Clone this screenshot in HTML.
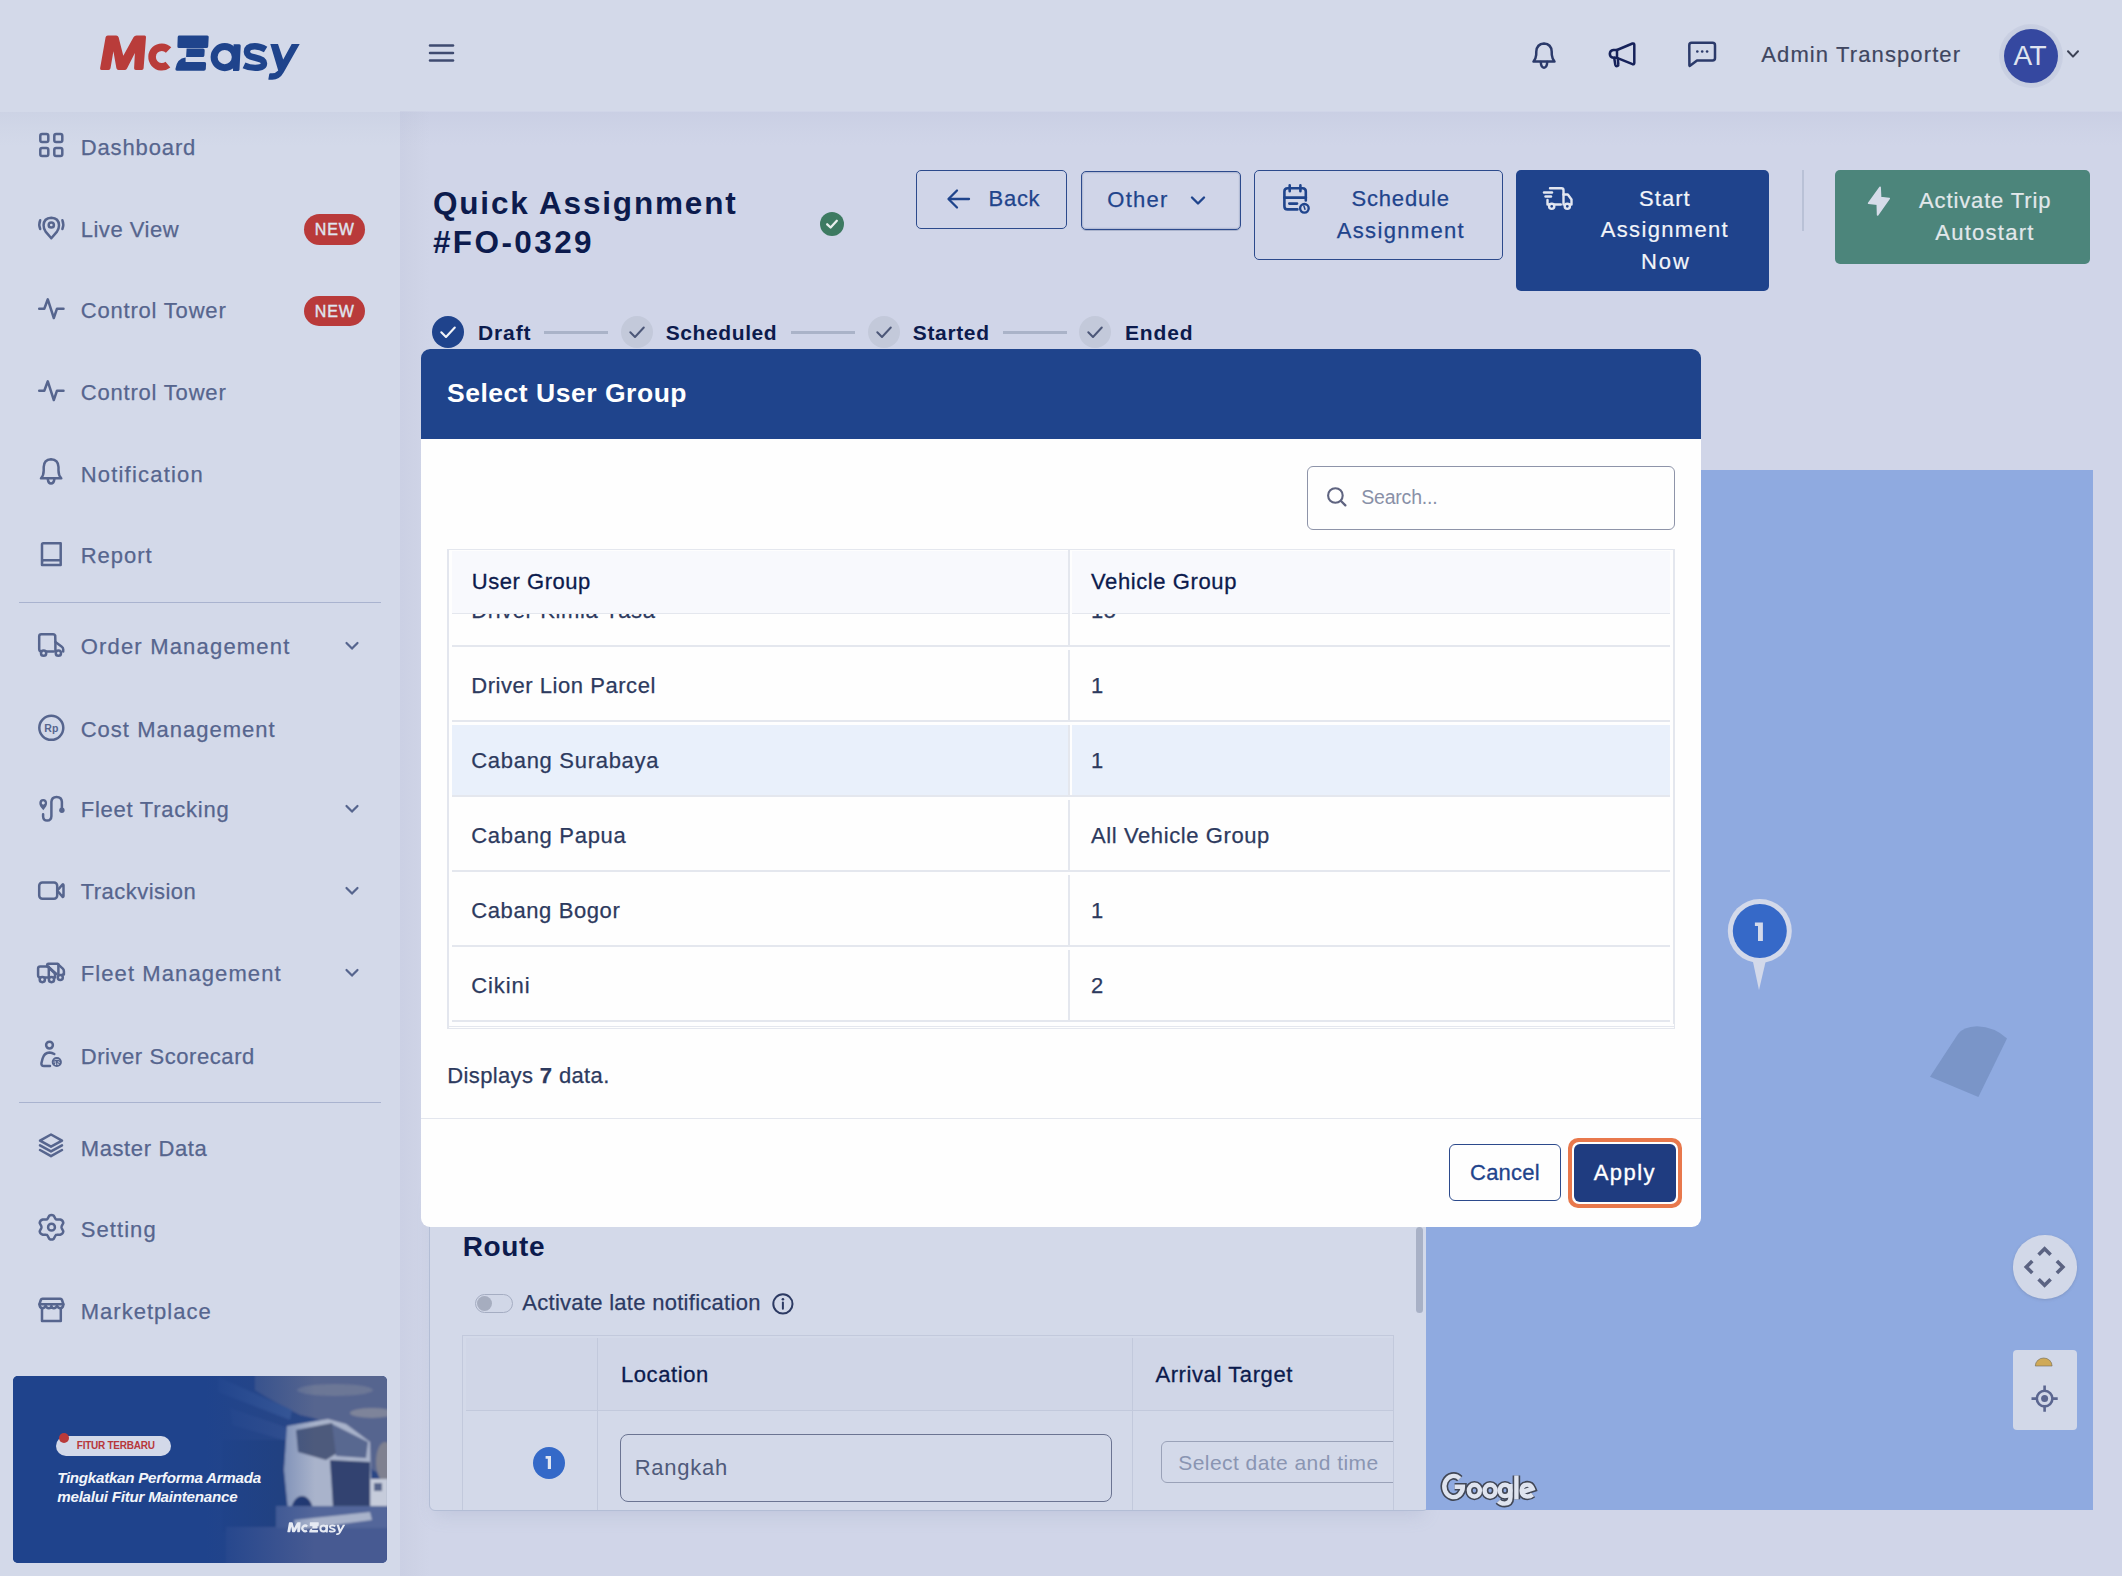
<!DOCTYPE html>
<html><head><meta charset="utf-8"><style>
*{box-sizing:border-box;margin:0;padding:0}
html,body{width:2122px;height:1576px;overflow:hidden}
body{background:#d3d9e9;font-family:"Liberation Sans",sans-serif;position:relative}
.a{position:absolute}
.t{position:absolute;line-height:1;white-space:nowrap}
svg{position:absolute;overflow:visible}
</style></head><body>
<div class="a" style="left:400px;top:111px;width:1722px;height:1465px;background:#d0d5e8"></div>
<div class="a" style="left:400px;top:111px;width:30px;height:1465px;background:linear-gradient(90deg,#cbd0e4,#cdd2e5 40%,rgba(208,213,232,0))"></div>
<div class="a" style="left:0;top:111.5px;width:2122px;height:34px;background:linear-gradient(rgba(150,160,195,.11),rgba(150,160,195,.05) 45%,rgba(150,160,195,0))"></div>
<svg style="left:0;top:0" width="400" height="1576" viewBox="0 0 400 1576"><g transform="translate(0 0) scale(1.0)">
<path fill="#b93c3a" d="M101.5 69.9 Q99.8 69.9 100.1 68.2 L105.6 37.2 Q106 35.4 107.8 35.4 L116.2 35.4 Q118 35.4 118.6 37.2 L123.3 55.7 L133.5 37.3 Q134.5 35.4 136.5 35.4 L144.6 35.4 Q146.2 35.4 146 37.2 L143.6 68.2 Q143.4 69.9 141.8 69.9 L135.8 69.9 Q134 69.9 134.1 68.2 L134.9 52.9 L127 68.4 Q126.2 69.9 124.5 69.9 L118.5 69.9 Q116.8 69.9 116.4 68.3 L113.4 51.2 L110.5 68.3 Q110.2 69.9 108.5 69.9 Z"/>
<path fill="none" stroke="#b93c3a" stroke-width="7.6" d="M168.6 50 A9.7 9.8 0 1 0 167.9 64.6"/>
<g fill="#1f448c">
<path d="M178.8 35.4 L207.2 35.4 Q208.9 35.4 208.7 37.1 L208.2 46.4 Q208 48.1 206.3 48.1 L179 48.1 Q177.3 48.1 177.4 46.4 L177.7 37.1 Q177.9 35.4 178.8 35.4 Z"/>
<path d="M186.6 48.6 L203 48.6 Q204.8 48.6 204.7 50.4 L204.4 55.4 Q204.3 57.1 202.6 57.1 L186.1 57.1 Z"/>
<path d="M185.6 57.4 L185.6 62 L204.5 62 Q206.3 62 206.1 63.8 L205.8 69 Q205.6 70.7 203.9 70.7 L177 70.7 Q175.2 70.7 175.4 69 Q176.8 58.3 185.6 57.4 Z"/>
<path d="M233.6 44.2 L239.3 44.2 Q240.8 44.2 240.7 45.7 L239.5 69.7 Q239.4 71.1 238 71.1 L233 71.1 Z"/>
<path d="M270.3 44 L278 44 L283.2 59.6 L291.7 44 L299.7 44 L283.6 72.6 Q279.6 79.8 272.3 79.8 L268.6 79.8 Q268.3 79.8 268.4 79 L269.2 74.3 Q269.4 73.3 270.4 73.3 L272.4 73.3 Q275.6 73.3 278.2 70.5 Z"/>
</g>
<circle cx="224.7" cy="57.1" r="10.6" fill="none" stroke="#1f448c" stroke-width="7"/>
<path fill="none" stroke="#1f448c" stroke-width="6.4" d="M265.6 49.6 Q260.2 46.3 254.8 46.3 Q246.9 46.4 246.9 51.8 Q247 56 254.6 57.5 Q263.9 59.3 264 63.3 Q264 67.9 255.2 67.9 Q249.4 67.9 244 65.3"/>
</g></svg>
<svg style="left:428px;top:40px" width="28" height="26" viewBox="0 0 28 26"><g stroke="#3f4b70" stroke-width="2.5" stroke-linecap="round"><line x1="2" y1="5.5" x2="25" y2="5.5"/><line x1="2" y1="13" x2="25" y2="13"/><line x1="2" y1="20.5" x2="25" y2="20.5"/></g></svg>
<div class="t" style="left:80.7px;top:136.68px;font-size:22px;color:#56658e;letter-spacing:0.88px;font-weight:400;-webkit-text-stroke:0.25px #56658e">Dashboard</div>
<div class="t" style="left:80.7px;top:218.58px;font-size:22px;color:#56658e;letter-spacing:0.53px;font-weight:400;-webkit-text-stroke:0.25px #56658e">Live View</div>
<div class="t" style="left:80.7px;top:300.38px;font-size:22px;color:#56658e;letter-spacing:0.81px;font-weight:400;-webkit-text-stroke:0.25px #56658e">Control Tower</div>
<div class="t" style="left:80.7px;top:381.58px;font-size:22px;color:#56658e;letter-spacing:0.81px;font-weight:400;-webkit-text-stroke:0.25px #56658e">Control Tower</div>
<div class="t" style="left:80.7px;top:463.88px;font-size:22px;color:#56658e;letter-spacing:1.2px;font-weight:400;-webkit-text-stroke:0.25px #56658e">Notification</div>
<div class="t" style="left:80.7px;top:545.08px;font-size:22px;color:#56658e;letter-spacing:0.99px;font-weight:400;-webkit-text-stroke:0.25px #56658e">Report</div>
<div class="t" style="left:80.7px;top:635.98px;font-size:22px;color:#56658e;letter-spacing:1.19px;font-weight:400;-webkit-text-stroke:0.25px #56658e">Order Management</div>
<div class="t" style="left:80.7px;top:718.98px;font-size:22px;color:#56658e;letter-spacing:1.02px;font-weight:400;-webkit-text-stroke:0.25px #56658e">Cost Management</div>
<div class="t" style="left:80.7px;top:799.18px;font-size:22px;color:#56658e;letter-spacing:0.76px;font-weight:400;-webkit-text-stroke:0.25px #56658e">Fleet Tracking</div>
<div class="t" style="left:80.7px;top:880.88px;font-size:22px;color:#56658e;letter-spacing:0.46px;font-weight:400;-webkit-text-stroke:0.25px #56658e">Trackvision</div>
<div class="t" style="left:80.7px;top:962.88px;font-size:22px;color:#56658e;letter-spacing:1.1px;font-weight:400;-webkit-text-stroke:0.25px #56658e">Fleet Management</div>
<div class="t" style="left:80.7px;top:1046.08px;font-size:22px;color:#56658e;letter-spacing:0.57px;font-weight:400;-webkit-text-stroke:0.25px #56658e">Driver Scorecard</div>
<div class="t" style="left:80.7px;top:1137.98px;font-size:22px;color:#56658e;letter-spacing:0.62px;font-weight:400;-webkit-text-stroke:0.25px #56658e">Master Data</div>
<div class="t" style="left:80.7px;top:1219.08px;font-size:22px;color:#56658e;letter-spacing:1.08px;font-weight:400;-webkit-text-stroke:0.25px #56658e">Setting</div>
<div class="t" style="left:80.7px;top:1300.68px;font-size:22px;color:#56658e;letter-spacing:1.02px;font-weight:400;-webkit-text-stroke:0.25px #56658e">Marketplace</div>
<div class="a" style="left:304px;top:214px;width:61px;height:30.5px;border-radius:16px;background:#b93a3a"></div>
<div class="t" style="left:314.8px;top:222.36px;font-size:16px;color:#dfe5f0;letter-spacing:0.9px;font-weight:400;-webkit-text-stroke:0.4px #dfe5f0">NEW</div>
<div class="a" style="left:304px;top:295.5px;width:61px;height:30.5px;border-radius:16px;background:#b93a3a"></div>
<div class="t" style="left:314.8px;top:303.86px;font-size:16px;color:#dfe5f0;letter-spacing:0.9px;font-weight:400;-webkit-text-stroke:0.4px #dfe5f0">NEW</div>
<div class="a" style="left:19px;top:602px;width:362px;height:1.3px;background:#a9b3cf"></div>
<div class="a" style="left:19px;top:1102px;width:362px;height:1.3px;background:#a9b3cf"></div>
<svg style="left:345px;top:641px" width="14" height="10" viewBox="0 0 14 10"><path d="M1.5 2 L7 7.6 L12.5 2" fill="none" stroke="#56658e" stroke-width="2.2" stroke-linecap="round" stroke-linejoin="round"/></svg>
<svg style="left:345px;top:804px" width="14" height="10" viewBox="0 0 14 10"><path d="M1.5 2 L7 7.6 L12.5 2" fill="none" stroke="#56658e" stroke-width="2.2" stroke-linecap="round" stroke-linejoin="round"/></svg>
<svg style="left:345px;top:886px" width="14" height="10" viewBox="0 0 14 10"><path d="M1.5 2 L7 7.6 L12.5 2" fill="none" stroke="#56658e" stroke-width="2.2" stroke-linecap="round" stroke-linejoin="round"/></svg>
<svg style="left:345px;top:968px" width="14" height="10" viewBox="0 0 14 10"><path d="M1.5 2 L7 7.6 L12.5 2" fill="none" stroke="#56658e" stroke-width="2.2" stroke-linecap="round" stroke-linejoin="round"/></svg>
<svg style="left:38px;top:132px" width="27" height="27" viewBox="0 0 27 27"><g fill="none" stroke="#56658e" stroke-width="2.5" stroke-linecap="round" stroke-linejoin="round"><rect x="2.3" y="2.1" width="8" height="8" rx="1.8"/><rect x="16.3" y="2.1" width="8" height="8" rx="1.8"/><rect x="2.3" y="16" width="8" height="8" rx="1.8"/><rect x="16.3" y="16" width="8" height="8" rx="1.8"/></g></svg>
<svg style="left:37px;top:215px" width="28" height="26" viewBox="0 0 28 26"><g fill="none" stroke="#56658e" stroke-width="2.5" stroke-linecap="round" stroke-linejoin="round">
<path d="M14.3 23.3 L8.6 16.6 Q6.6 14 6.6 10.3 Q6.8 3.1 14.3 2.8 Q21.8 3.1 22 10.3 Q22 14 20 16.6 Z"/>
<circle cx="14.3" cy="10" r="2.6"/>
<path d="M3.2 5.2 Q1.4 9.5 3.2 14"/><path d="M25.4 5.2 Q27.2 9.5 25.4 14"/></g></svg>
<svg style="left:37px;top:296px" width="29" height="26" viewBox="0 0 29 26"><g fill="none" stroke="#56658e" stroke-width="2.5" stroke-linecap="round" stroke-linejoin="round"><path d="M2.2 12.7 L7.3 12.7 L10.8 3.3 L16.8 22 L20 12.7 L26.5 12.7"/></g></svg>
<svg style="left:37px;top:378px" width="29" height="26" viewBox="0 0 29 26"><g fill="none" stroke="#56658e" stroke-width="2.5" stroke-linecap="round" stroke-linejoin="round"><path d="M2.2 12.7 L7.3 12.7 L10.8 3.3 L16.8 22 L20 12.7 L26.5 12.7"/></g></svg>
<svg style="left:37px;top:457px" width="28" height="30" viewBox="0 0 28 30"><g fill="none" stroke="#56658e" stroke-width="2.5" stroke-linecap="round" stroke-linejoin="round"><path d="M4 21.3 L24.3 21.3 Q21.5 18.6 21.5 13.5 L21.5 10 Q21.3 2.6 14 2.2 Q6.9 2.6 6.7 10 L6.7 13.5 Q6.7 18.6 4 21.3 Z"/><path d="M10.8 22 Q11.3 26.5 14 26.6 Q16.8 26.5 17.4 22"/></g></svg>
<svg style="left:38px;top:540px" width="27" height="28" viewBox="0 0 27 28"><g fill="none" stroke="#56658e" stroke-width="2.5" stroke-linecap="round" stroke-linejoin="round"><path d="M4 25 L4 4.5 Q4 3.2 5.3 3.2 L22.7 3.2 L22.7 25 L5.3 25 Q4 25 4 23.8 Q4 20.2 5.3 20.2 L22.7 20.2"/></g></svg>
<svg style="left:37px;top:632px" width="29" height="28" viewBox="0 0 29 28"><g fill="none" stroke="#56658e" stroke-width="2.5" stroke-linecap="round" stroke-linejoin="round"><path d="M4.5 19.5 Q2.2 19.3 2.2 17 L2.2 4.3 Q2.3 2.4 4.3 2.3 L16.2 2.3 Q17.6 2.3 18.2 3.6 L18.4 10 L24.5 14.5 Q26.2 15.7 26.2 17.2 L26.2 19.5"/><path d="M9 19.5 L16.5 19.5"/><path d="M18.4 10 L18.4 19.5"/><circle cx="6.6" cy="21.2" r="2.6"/><circle cx="21.4" cy="21.2" r="2.6"/></g></svg>
<svg style="left:37px;top:713px" width="29" height="30" viewBox="0 0 29 30"><g fill="none" stroke="#56658e" stroke-width="2.5" stroke-linecap="round" stroke-linejoin="round"><circle cx="14.3" cy="14.8" r="12"/></g><text x="14.3" y="18.6" text-anchor="middle" font-family="Liberation Sans" font-weight="700" font-size="10.5" fill="#56658e">Rp</text></svg>
<svg style="left:34px;top:790px" width="36" height="36" viewBox="34 790 36 36"><g fill="none" stroke="#56658e" stroke-width="2.5" stroke-linecap="round" stroke-linejoin="round" stroke-width="2.5"><path d="M43.1 814.2 L43.1 816.5 Q43.3 820.6 47.2 820.6 Q51.2 820.6 51.4 816.3 L51.4 801.9 Q51.6 796.9 56.6 796.9 Q61.7 796.9 61.9 801.9 L61.9 808.3"/></g><path d="M43.3 810.3 L40.3 806.4 Q39.3 804.9 39.3 803 Q39.5 799 43.2 798.9 Q46.9 799 47.1 803 Q47.1 804.9 46.1 806.4 Z M43.2 801.6 A1.4 1.4 0 1 0 43.21 801.6 Z" fill="#56658e" fill-rule="evenodd"/><circle cx="61.9" cy="810.3" r="2.7" fill="#56658e"/><circle cx="43.2" cy="802.9" r="1.3" fill="#d3d9e9"/></svg>
<svg style="left:37px;top:879px" width="29" height="24" viewBox="0 0 29 24"><g fill="none" stroke="#56658e" stroke-width="2.5" stroke-linecap="round" stroke-linejoin="round"><rect x="2.2" y="3.5" width="18" height="16.3" rx="3.2"/><path d="M20.2 11.6 L25.5 5.5 Q26.4 5 26.5 6.3 L26.5 17 Q26.4 18.3 25.5 17.8 Z"/></g></svg>
<svg style="left:34px;top:955px" width="36" height="36" viewBox="34 955 36 36"><g fill="none" stroke="#56658e" stroke-width="2.5" stroke-linecap="round" stroke-linejoin="round" stroke-width="2.4"><path d="M40.2 977.4 Q38.1 977.4 38.1 975.3 L38.1 968.4 Q38.2 966.4 40.2 966.4 L48.3 966.4 L48.8 966.8 L48.8 977.4"/><path d="M48.8 967.5 L54 972.5 Q55 973.6 55 975 L55 977.4 L53.8 977.4"/><path d="M44.9 977.4 L49 977.4"/><path d="M47.2 966.4 L47.2 964.6 Q47.3 963.7 48.2 963.7 L57.6 963.7 L58.4 964.3 L58.4 974.4"/><path d="M58.4 964.6 L62.8 968.6 Q63.9 969.7 63.9 971.2 L63.9 974.4 L62.6 974.4"/><path d="M48.8 967.3 L56.4 974"/><circle cx="42.3" cy="979.6" r="2.6"/><circle cx="51.5" cy="979.6" r="2.6"/><circle cx="60.3" cy="977.6" r="2.5"/></g></svg>
<svg style="left:34px;top:1036px" width="36" height="36" viewBox="34 1036 36 36"><g fill="none" stroke="#56658e" stroke-width="2.5" stroke-linecap="round" stroke-linejoin="round" stroke-width="2.5"><circle cx="49.5" cy="1045.1" r="3.4"/><path d="M54.3 1054 Q52 1052.5 49.5 1052.4 Q44.2 1052.6 42.6 1058.5 L41.4 1063.2 Q41.2 1066 44 1066 L50 1066"/></g><circle cx="56.8" cy="1062" r="4.1" fill="none" stroke="#56658e" stroke-width="2"/><path d="M53.5 1061.4 Q56.8 1059.3 60.1 1061.4 M56.8 1062 L56.8 1065.8 M55.2 1062.5 L53.8 1064.3 M58.4 1062.5 L59.8 1064.3" fill="none" stroke="#56658e" stroke-width="1.3"/><circle cx="56.8" cy="1062" r="1.2" fill="#56658e"/></svg>
<svg style="left:37px;top:1131px" width="28" height="29" viewBox="0 0 28 29"><g fill="none" stroke="#56658e" stroke-width="2.5" stroke-linecap="round" stroke-linejoin="round"><path d="M14 3.5 L25 9.6 L14 15.7 L3 9.6 Z"/><path d="M3 14.3 L14 20.4 L25 14.3"/><path d="M3 19 L14 25.2 L25 19"/></g></svg>
<svg style="left:34.7px;top:1212.4px" width="33" height="33" viewBox="0 0 24 24"><g fill="none" stroke="#56658e" stroke-width="1.8" stroke-linecap="round" stroke-linejoin="round"><path d="M10.3 2.8 Q12 1.5 13.7 2.8 L14.9 5 Q15.2 5.5 15.8 5.5 L18.3 5.5 Q20.3 6 20.6 8 L19.4 10.3 Q19.1 11 19.4 11.7 L20.6 14 Q20.4 16.1 18.3 16.5 L15.8 16.6 Q15.2 16.6 14.9 17.1 L13.7 19.4 Q12 20.7 10.3 19.4 L9.1 17.1 Q8.8 16.6 8.2 16.6 L5.7 16.5 Q3.6 16.1 3.4 14 L4.6 11.7 Q4.9 11 4.6 10.3 L3.4 8 Q3.7 6 5.7 5.5 L8.2 5.5 Q8.8 5.5 9.1 5 Z"/><circle cx="12" cy="11" r="2.5"/></g></svg>
<svg style="left:37px;top:1296px" width="29" height="28" viewBox="0 0 29 28"><g fill="none" stroke="#56658e" stroke-width="2.5" stroke-linecap="round" stroke-linejoin="round"><path d="M5.5 2.8 L23.3 2.8 Q24.6 2.8 25 4 L26.3 8 Q26.5 11.8 23.5 12.2 Q20.8 12.2 20 9.6 Q19.2 12.2 16.8 12.2 Q14.8 12.2 14.4 10 Q14 12.2 11.8 12.2 Q9.4 12.2 8.6 9.6 Q7.8 12.2 5.3 12.2 Q2.4 11.8 2.5 8 L3.8 4 Q4.2 2.8 5.5 2.8 Z"/><path d="M2.6 8.3 L26.2 8.3"/><path d="M5 12.2 L5 25 L23.8 25 L23.8 12.2"/></g></svg>
<svg style="left:1530px;top:41px" width="30" height="30" viewBox="0 0 30 30"><g fill="none" stroke="#2b3a6a" stroke-width="2.5" stroke-linecap="round" stroke-linejoin="round"><path d="M3.5 20.5 L24.5 20.5 Q22.3 18 21.8 13.8 L21.7 10.5 Q21.3 3.2 14 2.6 Q6.8 3.2 6.3 10.5 L6.2 13.8 Q5.8 18 3.5 20.5 Z"/><path d="M10.8 21 Q11 26.5 14 26.7 Q17 26.5 17.2 21"/></g></svg>
<svg style="left:1607px;top:40px" width="32" height="30" viewBox="0 0 32 30"><g fill="none" stroke="#16225a" stroke-width="2.5" stroke-linecap="round" stroke-linejoin="round"><path d="M10 10 L25.5 3.5 Q27.2 3 27.3 4.8 L27.3 23 Q27.2 24.8 25.5 24.2 L10 17.8 Z"/><path d="M10 10 L6.3 10 Q3 10.3 2.8 13.9 Q3 17.5 6.3 17.8 L10 17.8"/><path d="M7.2 17.8 L8.3 24.8 Q8.8 26.3 10.2 26.1 Q11.5 25.8 11.3 24.2 L10.8 18.6"/></g></svg>
<svg style="left:1686px;top:40px" width="32" height="30" viewBox="0 0 32 30"><g fill="none" stroke="#2b3a6a" stroke-width="2.5" stroke-linecap="round" stroke-linejoin="round"><path d="M5.5 2.8 L26.5 2.8 Q29 2.8 29 5.3 L29 18 Q29 20.5 26.5 20.5 L11 20.5 L4 25.8 Q3.5 26.2 3.4 25.4 L3.3 5.3 Q3.3 2.8 5.5 2.8 Z"/></g><g fill="#2b3a6a"><circle cx="11.3" cy="11.5" r="1.3"/><circle cx="16.2" cy="11.5" r="1.3"/><circle cx="21.1" cy="11.5" r="1.3"/></g></svg>
<div class="t" style="left:1761.3px;top:43.78px;font-size:22px;color:#3f4660;letter-spacing:1.11px;font-weight:400;-webkit-text-stroke:0.2px #3f4660">Admin Transporter</div>
<div class="a" style="left:1999px;top:24px;width:64px;height:64px;border-radius:50%;background:radial-gradient(circle,#c6cde0 60%,#cdd3e5 80%,#d3d9e9 100%)"></div>
<div class="a" style="left:2004px;top:28.8px;width:54.2px;height:54.2px;border-radius:50%;background:#3548a0"></div>
<div class="t" style="left:2013.5px;top:42.20px;font-size:28px;color:#dfe3ef;letter-spacing:-0.7px;font-weight:400;">AT</div>
<svg style="left:2066px;top:48px" width="14" height="12" viewBox="0 0 14 12"><path d="M2 3.3 L7 8.6 L12 3.3" fill="none" stroke="#3c4255" stroke-width="2" stroke-linecap="round" stroke-linejoin="round"/></svg>
<div class="t" style="left:432.9px;top:188.04px;font-size:31.5px;color:#0c1b4d;letter-spacing:1.83px;font-weight:700;">Quick Assignment</div>
<div class="t" style="left:432.9px;top:227.24px;font-size:31.5px;color:#0c1b4d;letter-spacing:2.41px;font-weight:700;">#FO-0329</div>
<div class="a" style="left:820px;top:212.4px;width:24px;height:24px;border-radius:50%;background:#3d7a61"></div>
<svg style="left:820px;top:212.4px" width="24" height="24" viewBox="0 0 24 24"><path d="M7.2 12.3 L10.6 15.5 L16.8 8.8" fill="none" stroke="#e9efed" stroke-width="2.3" stroke-linecap="round" stroke-linejoin="round"/></svg>
<div class="a" style="left:916px;top:170.3px;width:151px;height:58.5px;border:1.4px solid #2c4a8c;border-radius:5px"></div>
<svg style="left:946px;top:187px" width="26" height="24" viewBox="0 0 26 24"><g fill="none" stroke="#1f448c" stroke-width="2.3" stroke-linecap="round" stroke-linejoin="round"><path d="M23 12 L3 12"/><path d="M11 3.5 L2.5 12 L11 20.5"/></g></svg>
<div class="t" style="left:988.6px;top:188.08px;font-size:22px;color:#1f448c;letter-spacing:0.69px;font-weight:400;-webkit-text-stroke:0.25px #1f448c">Back</div>
<div class="a" style="left:1080.5px;top:170.5px;width:160px;height:59.5px;border:1.4px solid #2c4a8c;border-radius:5px;box-shadow:0 0 0 1.2px #b3bcd5 inset, 0 1px 0 #aab3cc"></div>
<div class="t" style="left:1107.3px;top:188.98px;font-size:22px;color:#1f448c;letter-spacing:1.24px;font-weight:400;-webkit-text-stroke:0.25px #1f448c">Other</div>
<svg style="left:1189px;top:193px" width="18" height="16" viewBox="0 0 18 16"><path d="M3 4.5 L9 10.5 L15 4.5" fill="none" stroke="#1f448c" stroke-width="2.4" stroke-linecap="round" stroke-linejoin="round"/></svg>
<div class="a" style="left:1254px;top:170px;width:249px;height:90px;border:1.4px solid #2c4a8c;border-radius:5px"></div>
<svg style="left:1270px;top:175px" width="50" height="45" viewBox="1270 175 50 45"><g fill="none" stroke="#1f448c" stroke-width="2.6" stroke-linecap="round" stroke-linejoin="round"><path d="M1297.4 209.4 L1287.6 209.4 Q1284.4 209.4 1284.4 206.2 L1284.4 191.5 Q1284.4 188.3 1287.6 188.3 L1302.6 188.3 Q1305.8 188.3 1305.8 191.5 L1305.8 200.5"/><path d="M1289.7 185.4 L1289.7 191.2 M1300.4 185.4 L1300.4 191.2"/><path d="M1284.4 197.6 L1305.8 197.6"/><path d="M1289.3 203.6 L1297 203.6"/><circle cx="1304.4" cy="208.3" r="4.3" stroke-width="2.4"/><path d="M1303.9 206 L1305 209.2" stroke-width="1.5"/></g></svg>
<div class="t" style="left:1351.4px;top:187.98px;font-size:22px;color:#1f448c;letter-spacing:0.84px;font-weight:400;-webkit-text-stroke:0.25px #1f448c">Schedule</div>
<div class="t" style="left:1336.8px;top:219.68px;font-size:22px;color:#1f448c;letter-spacing:1.32px;font-weight:400;-webkit-text-stroke:0.25px #1f448c">Assignment</div>
<div class="a" style="left:1516px;top:170px;width:253px;height:120.5px;background:#1f438c;border-radius:5px"></div>
<svg style="left:1541px;top:184px" width="34" height="30" viewBox="0 0 34 30"><g fill="none" stroke="#e3e7f1" stroke-width="2.4" stroke-linecap="round" stroke-linejoin="round"><path d="M9 4.3 L20.5 4.3 Q22.5 4.3 22.5 6.3 L22.5 20.5"/><path d="M22.5 10.5 L26.8 10.5 L30.5 15.5 L30.5 20.5 L29 20.5"/><path d="M19.8 20.5 L13 20.5"/><path d="M8.5 20.5 L6.5 20.5 L6.5 16"/><circle cx="10.7" cy="22.3" r="2.6"/><circle cx="26.3" cy="22.3" r="2.6"/><path d="M3 8.5 L11 8.5"/><path d="M4.5 12.5 L10 12.5"/></g></svg>
<div class="t" style="left:1639.0px;top:187.98px;font-size:22px;color:#f2f4f9;letter-spacing:1.06px;font-weight:400;-webkit-text-stroke:0.2px #f2f4f9">Start</div>
<div class="t" style="left:1600.8px;top:219.38px;font-size:22px;color:#f2f4f9;letter-spacing:1.32px;font-weight:400;-webkit-text-stroke:0.2px #f2f4f9">Assignment</div>
<div class="t" style="left:1641.0px;top:250.68px;font-size:22px;color:#f2f4f9;letter-spacing:1.94px;font-weight:400;-webkit-text-stroke:0.2px #f2f4f9">Now</div>
<div class="a" style="left:1801.5px;top:170px;width:2px;height:60.5px;background:#b9c1d6"></div>
<div class="a" style="left:1835px;top:170px;width:254.5px;height:93.5px;background:#4c857b;border-radius:5px"></div>
<svg style="left:1855px;top:178px" width="50" height="44" viewBox="1855 178 50 44"><path d="M1880.1 187.2 L1868.6 203.3 L1877.3 204.3 L1877.6 215 L1889.2 198.5 L1880.6 197.6 Z" fill="#d6dce9" stroke="#d6dce9" stroke-width="1.6" stroke-linejoin="round"/></svg>
<div class="t" style="left:1919.0px;top:190.38px;font-size:22px;color:#e2e8eb;letter-spacing:0.87px;font-weight:400;-webkit-text-stroke:0.2px #e2e8eb">Activate Trip</div>
<div class="t" style="left:1935.3px;top:221.98px;font-size:22px;color:#e2e8eb;letter-spacing:1.26px;font-weight:400;-webkit-text-stroke:0.2px #e2e8eb">Autostart</div>
<div class="a" style="left:432px;top:316px;width:32px;height:32px;border-radius:50%;background:#1f438c"></div>
<svg style="left:432px;top:316px" width="32" height="32" viewBox="0 0 32 32"><path d="M9.3 16.3 L14 21 L22.8 11.5" fill="none" stroke="#f1f3f8" stroke-width="2.1" stroke-linecap="round" stroke-linejoin="round"/></svg>
<div class="a" style="left:621px;top:316px;width:32px;height:32px;border-radius:50%;background:#c3c9da"></div>
<svg style="left:621px;top:316px" width="32" height="32" viewBox="0 0 32 32"><path d="M9.3 16.3 L14 21 L22.8 11.5" fill="none" stroke="#4c5778" stroke-width="2" stroke-linecap="round" stroke-linejoin="round"/></svg>
<div class="a" style="left:868px;top:316px;width:32px;height:32px;border-radius:50%;background:#c3c9da"></div>
<svg style="left:868px;top:316px" width="32" height="32" viewBox="0 0 32 32"><path d="M9.3 16.3 L14 21 L22.8 11.5" fill="none" stroke="#4c5778" stroke-width="2" stroke-linecap="round" stroke-linejoin="round"/></svg>
<div class="a" style="left:1079.4px;top:316px;width:32px;height:32px;border-radius:50%;background:#c3c9da"></div>
<svg style="left:1079.4px;top:316px" width="32" height="32" viewBox="0 0 32 32"><path d="M9.3 16.3 L14 21 L22.8 11.5" fill="none" stroke="#4c5778" stroke-width="2" stroke-linecap="round" stroke-linejoin="round"/></svg>
<div class="a" style="left:544.3px;top:331px;width:63.6px;height:2.6px;background:#aab3c8"></div>
<div class="a" style="left:791px;top:331px;width:63.8px;height:2.6px;background:#aab3c8"></div>
<div class="a" style="left:1003px;top:331px;width:63.8px;height:2.6px;background:#aab3c8"></div>
<div class="t" style="left:478.0px;top:322.02px;font-size:21px;color:#0c1b4d;letter-spacing:0.87px;font-weight:700;">Draft</div>
<div class="t" style="left:665.7px;top:322.02px;font-size:21px;color:#0c1b4d;letter-spacing:0.6px;font-weight:700;">Scheduled</div>
<div class="t" style="left:912.8px;top:322.02px;font-size:21px;color:#0c1b4d;letter-spacing:0.64px;font-weight:700;">Started</div>
<div class="t" style="left:1125.0px;top:322.02px;font-size:21px;color:#0c1b4d;letter-spacing:0.83px;font-weight:700;">Ended</div>
<div class="a" style="left:429px;top:1180px;width:1000px;height:330.5px;background:#d3d9e9;border:1.2px solid #b3bdd5;border-radius:6px;box-shadow:0 10px 16px -6px rgba(150,160,190,.28)"></div>
<div class="a" style="left:1416px;top:1226.7px;width:7px;height:86px;border-radius:4px;background:#a8b1c6"></div>
<div class="t" style="left:462.8px;top:1232.90px;font-size:28px;color:#0c1b4d;letter-spacing:0.6px;font-weight:700;">Route</div>
<div class="a" style="left:474.7px;top:1293.8px;width:38px;height:19px;border-radius:10px;border:1px solid #a5adc2;background:#d1d7e7"></div>
<div class="a" style="left:477px;top:1296px;width:15px;height:15px;border-radius:50%;background:#a6adbf"></div>
<div class="t" style="left:522.3px;top:1291.78px;font-size:22px;color:#2c3a63;letter-spacing:0.28px;font-weight:400;-webkit-text-stroke:0.25px #2c3a63">Activate late notification</div>
<svg style="left:771px;top:1292px" width="24" height="24" viewBox="0 0 24 24"><circle cx="11.9" cy="11.9" r="9.6" fill="none" stroke="#2c3a63" stroke-width="2"/><circle cx="11.9" cy="7.3" r="1.3" fill="#2c3a63"/><path d="M11.9 10.5 L11.9 16.8" stroke="#2c3a63" stroke-width="2" stroke-linecap="round"/></svg>
<div class="a" style="left:462.4px;top:1335.2px;width:931px;height:175px;border:1px solid #c2c9dc;border-right:none;border-bottom:none"></div>
<div class="a" style="left:466px;top:1338px;width:927px;height:72px;background:#d0d6e7"></div>
<div class="a" style="left:466px;top:1410px;width:927px;height:1.2px;background:#c2c9dc"></div>
<div class="a" style="left:596.8px;top:1338px;width:1.3px;height:172px;background:#c2c9dc"></div>
<div class="a" style="left:1131.8px;top:1338px;width:1.3px;height:172px;background:#c2c9dc"></div>
<div class="t" style="left:620.9px;top:1364.18px;font-size:22px;color:#0c1b4d;letter-spacing:0.6px;font-weight:400;-webkit-text-stroke:0.3px #0c1b4d">Location</div>
<div class="t" style="left:1155.4px;top:1364.18px;font-size:22px;color:#0c1b4d;letter-spacing:0.6px;font-weight:400;-webkit-text-stroke:0.3px #0c1b4d">Arrival Target</div>
<div class="a" style="left:532.8px;top:1447.3px;width:32px;height:32px;border-radius:50%;background:#3469c8"></div>
<svg style="left:0;top:0" width="600" height="1500" viewBox="0 0 600 1500"><path d="M545.6 1455.9 L551 1455.9 L551 1469 L547.8 1469 L547.8 1458.7 L545.6 1458.7 Z" fill="#dfe5f1"/></svg>
<div class="a" style="left:620.4px;top:1434.2px;width:492px;height:67.6px;border:1.4px solid #6b7492;border-radius:8px"></div>
<div class="t" style="left:634.7px;top:1456.98px;font-size:22px;color:#4f5a7a;letter-spacing:0.75px;font-weight:400;">Rangkah</div>
<div class="a" style="left:1161px;top:1441.3px;width:260px;height:42px;border:1.2px solid #9aa2b8;border-radius:6px"></div>
<div class="a" style="left:1393.4px;top:1420px;width:32.6px;height:88.5px;background:#d3d9e9"></div>
<div class="a" style="left:1393.4px;top:1335.2px;width:1px;height:175px;background:#c2c9dc"></div>
<div class="t" style="left:1178.2px;top:1452.22px;font-size:21px;color:#8a95b2;letter-spacing:0.45px;font-weight:400;">Select date and time</div>
<div class="a" style="left:1426.4px;top:470px;width:666.6px;height:1039.7px;background:#8faae0"></div>
<svg style="left:1426px;top:470px" width="667" height="1040" viewBox="1426 470 667 1040"><path d="M1930 1076.7 L1958 1034 Q1963 1027 1977 1026.3 Q1995 1027 2007 1038.6 L1978.4 1097 Z" fill="#7a95c8"/></svg>
<svg style="left:1726px;top:897px" width="68" height="96" viewBox="1726 897 68 96"><path d="M1752.6 960 L1759 990 L1766 960 Z" fill="#d3d9ea"/><circle cx="1759.8" cy="931" r="32" fill="#d3d9ea"/><circle cx="1759.8" cy="931" r="27" fill="#3669c8"/><path d="M1754.9 922.6 L1762.9 922.6 L1762.9 940.9 L1758 940.9 L1758 925.9 L1754.9 925.9 Z" fill="#d3d9ea"/></svg>
<div class="a" style="left:2013.4px;top:1235.3px;width:63.6px;height:63.6px;border-radius:50%;background:#d2d8e8;box-shadow:0 1px 3px rgba(100,110,140,.3)"></div>
<svg style="left:2013.4px;top:1235.3px" width="64" height="64" viewBox="0 0 64 64"><g fill="none" stroke="#5b6382" stroke-width="3.6" stroke-linejoin="miter"><path d="M25.6 19.8 L31.6 13.8 L37.6 19.8"/><path d="M25.6 44.2 L31.6 50.2 L37.6 44.2"/><path d="M19.3 26 L13.3 32 L19.3 38"/><path d="M43.9 26 L49.9 32 L43.9 38"/></g></svg>
<div class="a" style="left:2013.4px;top:1349.8px;width:63.6px;height:80px;border-radius:4px;background:#d2d8e8"></div>
<svg style="left:2013.4px;top:1349.8px" width="64" height="80" viewBox="0 0 64 80"><path d="M22.3 16 A8.4 8 0 0 1 39.1 16 Z" fill="#cfa957" stroke="#6f6a5a" stroke-width=".6"/><g fill="none" stroke="#5b6690" stroke-width="2.6"><circle cx="31.6" cy="48.6" r="7.8"/><path d="M31.6 35.5 L31.6 40.8 M31.6 56.4 L31.6 61.7 M18.5 48.6 L23.8 48.6 M39.4 48.6 L44.7 48.6"/></g><circle cx="31.6" cy="48.6" r="3.5" fill="#5b6690"/></svg>
<svg style="left:1430px;top:1461px" width="120" height="55" viewBox="1430 1460 120 55"><defs><g id="gg"><path d="M1459.8 1477.6 A9.3 10.6 0 1 0 1462.9 1485.8 L1454.6 1485.8"/><ellipse cx="1474.4" cy="1489.6" rx="5.5" ry="5.9"/><ellipse cx="1490.1" cy="1489.6" rx="5.5" ry="5.9"/><ellipse cx="1505" cy="1489.4" rx="5.3" ry="5.7"/><path d="M1510.5 1483 L1510.5 1496 Q1510.5 1502.6 1504.6 1502.6 Q1500.6 1502.6 1498.4 1500.2"/><path d="M1516.4 1474.5 L1516.4 1498.3"/><path d="M1522.2 1491 L1532.6 1487.6 Q1531 1483.5 1527.2 1483.6 Q1521.7 1483.9 1521.7 1489.6 Q1521.9 1495.4 1527.5 1495.5 Q1530.4 1495.5 1532.6 1493.5"/></g></defs><use href="#gg" fill="none" stroke="#414756" stroke-width="7.6"/><use href="#gg" fill="none" stroke="#dfe4ef" stroke-width="4.4"/></svg>
<div class="a" style="left:13.1px;top:1376px;width:374px;height:186.6px;border-radius:5px;overflow:hidden;background:#1f438c">
<svg class="a" style="left:0;top:0" width="374" height="187" viewBox="13 1376 374 187">
<defs><filter id="bl" x="-10%" y="-10%" width="120%" height="120%"><feGaussianBlur stdDeviation="1.1"/></filter>
<linearGradient id="fade" x1="0" x2="1" y1="0" y2="0"><stop offset="0" stop-color="#1f438c" stop-opacity="1"/><stop offset="0.45" stop-color="#1f438c" stop-opacity=".55"/><stop offset="1" stop-color="#1f438c" stop-opacity="0"/></linearGradient></defs>
<g filter="url(#bl)">
<rect x="195" y="1370" width="200" height="200" fill="#2a4785"/>
<path d="M255 1370 L395 1370 L395 1480 L372 1470 L360 1440 Q330 1420 300 1415 Q270 1400 255 1390 Z" fill="#56658f"/>
<ellipse cx="335" cy="1390" rx="38" ry="6" fill="#6c7796"/>
<ellipse cx="372" cy="1413" rx="22" ry="5" fill="#7e849a"/>
<ellipse cx="385" cy="1462" rx="9" ry="20" fill="#7f8190"/>
<path d="M218 1377 L292 1410 L290 1420 L218 1392 Z" fill="#3a5a98"/>
<path d="M230 1408 L300 1432 L300 1445 L232 1425 Z" fill="#34518f"/>
<rect x="222" y="1440" width="68" height="92" fill="#243f7c"/>
<path d="M287 1426 L328 1419 L346 1424 L370 1442 L372 1520 L342 1527 L290 1530 L284 1470 Z" fill="#a9b3cb"/>
<path d="M296 1430 L332 1423 L345 1448 L326 1460 L298 1452 Z" fill="#4d5a7c"/>
<path d="M332 1424 L368 1442 L366 1458 L336 1456 Z" fill="#586790"/>
<path d="M330 1460 L370 1462 L370 1520 L334 1522 Z" fill="#33436f"/>
<ellipse cx="302" cy="1512" rx="11" ry="16" fill="#23396f"/>
<rect x="371" y="1479" width="17" height="27" fill="#c6ccdb"/>
<rect x="374" y="1483" width="8" height="8" fill="#55638a"/>
<rect x="226" y="1527" width="162" height="40" fill="#465a92"/>
<rect x="276" y="1506" width="112" height="22" fill="#53669a"/>
<path d="M294 1520 L370 1512 L372 1520 L296 1530 Z" fill="#a9b3cb"/>
</g>
<rect x="205" y="1376" width="110" height="187" fill="url(#fade)"/>
<rect x="13" y="1376" width="193" height="187" fill="#1f438c"/>
</svg>
</div>
<div class="a" style="left:56px;top:1435.7px;width:115.3px;height:20px;border-radius:10px;background:#d3d9e9"></div>
<div class="a" style="left:59px;top:1432.6px;width:10.4px;height:10.4px;border-radius:50%;background:#b93a3a"></div>
<div class="t" style="left:76.8px;top:1441.13px;font-size:10px;color:#b7363a;letter-spacing:-0.25px;font-weight:700;">FITUR TERBARU</div>
<div class="t" style="left:57.2px;top:1469.83px;font-size:15.2px;color:#f3f5fa;letter-spacing:-0.28px;font-weight:700;font-style:italic">Tingkatkan Performa Armada</div>
<div class="t" style="left:57.2px;top:1488.93px;font-size:15.2px;color:#f3f5fa;letter-spacing:-0.25px;font-weight:700;font-style:italic">melalui Fitur Maintenance</div>
<svg style="left:0;top:0" width="400" height="1576" viewBox="0 0 400 1576"><g transform="translate(258.3 1511.937) scale(0.29)">
<path fill="#e6eaf3" d="M101.5 69.9 Q99.8 69.9 100.1 68.2 L105.6 37.2 Q106 35.4 107.8 35.4 L116.2 35.4 Q118 35.4 118.6 37.2 L123.3 55.7 L133.5 37.3 Q134.5 35.4 136.5 35.4 L144.6 35.4 Q146.2 35.4 146 37.2 L143.6 68.2 Q143.4 69.9 141.8 69.9 L135.8 69.9 Q134 69.9 134.1 68.2 L134.9 52.9 L127 68.4 Q126.2 69.9 124.5 69.9 L118.5 69.9 Q116.8 69.9 116.4 68.3 L113.4 51.2 L110.5 68.3 Q110.2 69.9 108.5 69.9 Z"/>
<path fill="none" stroke="#e6eaf3" stroke-width="7.6" d="M168.6 50 A9.7 9.8 0 1 0 167.9 64.6"/>
<g fill="#e6eaf3">
<path d="M178.8 35.4 L207.2 35.4 Q208.9 35.4 208.7 37.1 L208.2 46.4 Q208 48.1 206.3 48.1 L179 48.1 Q177.3 48.1 177.4 46.4 L177.7 37.1 Q177.9 35.4 178.8 35.4 Z"/>
<path d="M186.6 48.6 L203 48.6 Q204.8 48.6 204.7 50.4 L204.4 55.4 Q204.3 57.1 202.6 57.1 L186.1 57.1 Z"/>
<path d="M185.6 57.4 L185.6 62 L204.5 62 Q206.3 62 206.1 63.8 L205.8 69 Q205.6 70.7 203.9 70.7 L177 70.7 Q175.2 70.7 175.4 69 Q176.8 58.3 185.6 57.4 Z"/>
<path d="M233.6 44.2 L239.3 44.2 Q240.8 44.2 240.7 45.7 L239.5 69.7 Q239.4 71.1 238 71.1 L233 71.1 Z"/>
<path d="M270.3 44 L278 44 L283.2 59.6 L291.7 44 L299.7 44 L283.6 72.6 Q279.6 79.8 272.3 79.8 L268.6 79.8 Q268.3 79.8 268.4 79 L269.2 74.3 Q269.4 73.3 270.4 73.3 L272.4 73.3 Q275.6 73.3 278.2 70.5 Z"/>
</g>
<circle cx="224.7" cy="57.1" r="10.6" fill="none" stroke="#e6eaf3" stroke-width="7"/>
<path fill="none" stroke="#e6eaf3" stroke-width="6.4" d="M265.6 49.6 Q260.2 46.3 254.8 46.3 Q246.9 46.4 246.9 51.8 Q247 56 254.6 57.5 Q263.9 59.3 264 63.3 Q264 67.9 255.2 67.9 Q249.4 67.9 244 65.3"/>
</g></svg>
<div class="a" style="left:421px;top:349.2px;width:1280px;height:877.5px;background:#fefefe;border-radius:9px;overflow:hidden">
<div class="a" style="left:0;top:0;width:1280px;height:89.5px;background:#1f448c"></div>
</div>
<div class="t" style="left:447.0px;top:379.57px;font-size:26.5px;color:#ffffff;letter-spacing:0.52px;font-weight:700;">Select User Group</div>
<div class="a" style="left:1307.2px;top:466.2px;width:367.8px;height:63.5px;border:1.2px solid #8e94a9;border-radius:6px"></div>
<svg style="left:1324px;top:484px" width="26" height="26" viewBox="0 0 26 26"><circle cx="11.4" cy="11.5" r="7.3" fill="none" stroke="#5f6480" stroke-width="2.1"/><path d="M17 17 L21.4 21.4" stroke="#5f6480" stroke-width="2.3" stroke-linecap="round"/></svg>
<div class="t" style="left:1361.2px;top:487.89px;font-size:19.5px;color:#8990a7;letter-spacing:-0.2px;font-weight:400;">Search...</div>
<div class="a" style="left:447.2px;top:549px;width:1228px;height:480px;border:1.5px solid #e4e7ee"></div>
<div class="a" style="left:447px;top:549px;width:2px;height:480px;background:#e3e6ee"></div>
<div class="a" style="left:448.7px;top:613px;width:1225px;height:414px;overflow:hidden">
<div class="t" style="left:22.6px;top:-12.82px;font-size:22px;color:#2d3a5e;letter-spacing:0.6px;font-weight:400;-webkit-text-stroke:0.25px #2d3a5e">Driver Kimia Yasa</div>
<div class="t" style="left:642.3px;top:-12.82px;font-size:22px;color:#2d3a5e;letter-spacing:0.5px;font-weight:400;-webkit-text-stroke:0.25px #2d3a5e">15</div>
<div class="a" style="left:3.3px;top:32.4px;width:1217.8px;height:1.4px;background:#e4e7ee"></div>
<div class="a" style="left:619.5px;top:-38.0px;width:1.4px;height:71px;background:#e4e7ee"></div>
<div class="t" style="left:22.6px;top:62.18px;font-size:22px;color:#2d3a5e;letter-spacing:0.54px;font-weight:400;-webkit-text-stroke:0.25px #2d3a5e">Driver Lion Parcel</div>
<div class="t" style="left:642.3px;top:62.18px;font-size:22px;color:#2d3a5e;letter-spacing:0px;font-weight:400;-webkit-text-stroke:0.25px #2d3a5e">1</div>
<div class="a" style="left:3.3px;top:107.4px;width:1217.8px;height:1.4px;background:#e4e7ee"></div>
<div class="a" style="left:619.5px;top:37.0px;width:1.4px;height:71px;background:#e4e7ee"></div>
<div class="a" style="left:3.3px;top:112.0px;width:616.8px;height:71.5px;background:#e9f0fb"></div>
<div class="a" style="left:623.8px;top:112.0px;width:597.3px;height:71.5px;background:#e9f0fb"></div>
<div class="t" style="left:22.6px;top:137.18px;font-size:22px;color:#2d3a5e;letter-spacing:0.7px;font-weight:400;-webkit-text-stroke:0.25px #2d3a5e">Cabang Surabaya</div>
<div class="t" style="left:642.3px;top:137.18px;font-size:22px;color:#2d3a5e;letter-spacing:0px;font-weight:400;-webkit-text-stroke:0.25px #2d3a5e">1</div>
<div class="a" style="left:3.3px;top:182.4px;width:1217.8px;height:1.4px;background:#e4e7ee"></div>
<div class="a" style="left:619.5px;top:112.0px;width:1.4px;height:71px;background:#e4e7ee"></div>
<div class="t" style="left:22.6px;top:212.18px;font-size:22px;color:#2d3a5e;letter-spacing:0.7px;font-weight:400;-webkit-text-stroke:0.25px #2d3a5e">Cabang Papua</div>
<div class="t" style="left:642.3px;top:212.18px;font-size:22px;color:#2d3a5e;letter-spacing:0.6px;font-weight:400;-webkit-text-stroke:0.25px #2d3a5e">All Vehicle Group</div>
<div class="a" style="left:3.3px;top:257.4px;width:1217.8px;height:1.4px;background:#e4e7ee"></div>
<div class="a" style="left:619.5px;top:187.0px;width:1.4px;height:71px;background:#e4e7ee"></div>
<div class="t" style="left:22.6px;top:287.18px;font-size:22px;color:#2d3a5e;letter-spacing:0.6px;font-weight:400;-webkit-text-stroke:0.25px #2d3a5e">Cabang Bogor</div>
<div class="t" style="left:642.3px;top:287.18px;font-size:22px;color:#2d3a5e;letter-spacing:0px;font-weight:400;-webkit-text-stroke:0.25px #2d3a5e">1</div>
<div class="a" style="left:3.3px;top:332.4px;width:1217.8px;height:1.4px;background:#e4e7ee"></div>
<div class="a" style="left:619.5px;top:262.0px;width:1.4px;height:71px;background:#e4e7ee"></div>
<div class="t" style="left:22.6px;top:362.18px;font-size:22px;color:#2d3a5e;letter-spacing:0.9px;font-weight:400;-webkit-text-stroke:0.25px #2d3a5e">Cikini</div>
<div class="t" style="left:642.3px;top:362.18px;font-size:22px;color:#2d3a5e;letter-spacing:0px;font-weight:400;-webkit-text-stroke:0.25px #2d3a5e">2</div>
<div class="a" style="left:3.3px;top:407.4px;width:1217.8px;height:1.4px;background:#e4e7ee"></div>
<div class="a" style="left:619.5px;top:337.0px;width:1.4px;height:71px;background:#e4e7ee"></div>
</div>
<div class="a" style="left:452px;top:550.5px;width:616.5px;height:62.5px;background:#f8f9fd"></div>
<div class="a" style="left:1072px;top:550.5px;width:598px;height:62.5px;background:#f8f9fd"></div>
<div class="a" style="left:452px;top:612.6px;width:617px;height:1.3px;background:#e4e7ee"></div>
<div class="a" style="left:1072px;top:612.6px;width:598px;height:1.3px;background:#e4e7ee"></div>
<div class="a" style="left:1068.2px;top:550px;width:1.4px;height:96px;background:#e4e7ee"></div>
<div class="a" style="left:1672.5px;top:550px;width:1.4px;height:474px;background:#e4e7ee"></div>
<div class="a" style="left:447.2px;top:1025.8px;width:1227px;height:1.2px;background:#e4e7ee"></div>
<div class="t" style="left:471.7px;top:571.18px;font-size:22px;color:#0c1b4d;letter-spacing:0.55px;font-weight:400;-webkit-text-stroke:0.3px #0c1b4d">User Group</div>
<div class="t" style="left:1091.0px;top:571.18px;font-size:22px;color:#0c1b4d;letter-spacing:0.6px;font-weight:400;-webkit-text-stroke:0.3px #0c1b4d">Vehicle Group</div>
<div class="t" style="left:447.3px;top:1065.28px;font-size:22px;color:#2d3a5e;letter-spacing:0.36px;font-weight:400;-webkit-text-stroke:0.25px #2d3a5e">Displays <b style="font-weight:700">7</b> data.</div>
<div class="a" style="left:421px;top:1117.6px;width:1280px;height:1.3px;background:#e3e6ee"></div>
<div class="a" style="left:1449px;top:1144px;width:111.7px;height:57.3px;border:1.4px solid #2c4a8c;border-radius:6px"></div>
<div class="t" style="left:1470.0px;top:1162.18px;font-size:22px;color:#1f448c;letter-spacing:0.24px;font-weight:400;-webkit-text-stroke:0.3px #1f448c">Cancel</div>
<div class="a" style="left:1568px;top:1138px;width:114px;height:69.8px;border-radius:10px;background:#e8784c"></div>
<div class="a" style="left:1571.8px;top:1141.8px;width:106.4px;height:62.2px;border-radius:7px;background:#fefefe"></div>
<div class="a" style="left:1573.9px;top:1144px;width:101.8px;height:58px;border-radius:6px;background:#1f3c80"></div>
<div class="t" style="left:1593.7px;top:1162.38px;font-size:22px;color:#ffffff;letter-spacing:1.44px;font-weight:400;-webkit-text-stroke:0.35px #ffffff">Apply</div>
</body></html>
